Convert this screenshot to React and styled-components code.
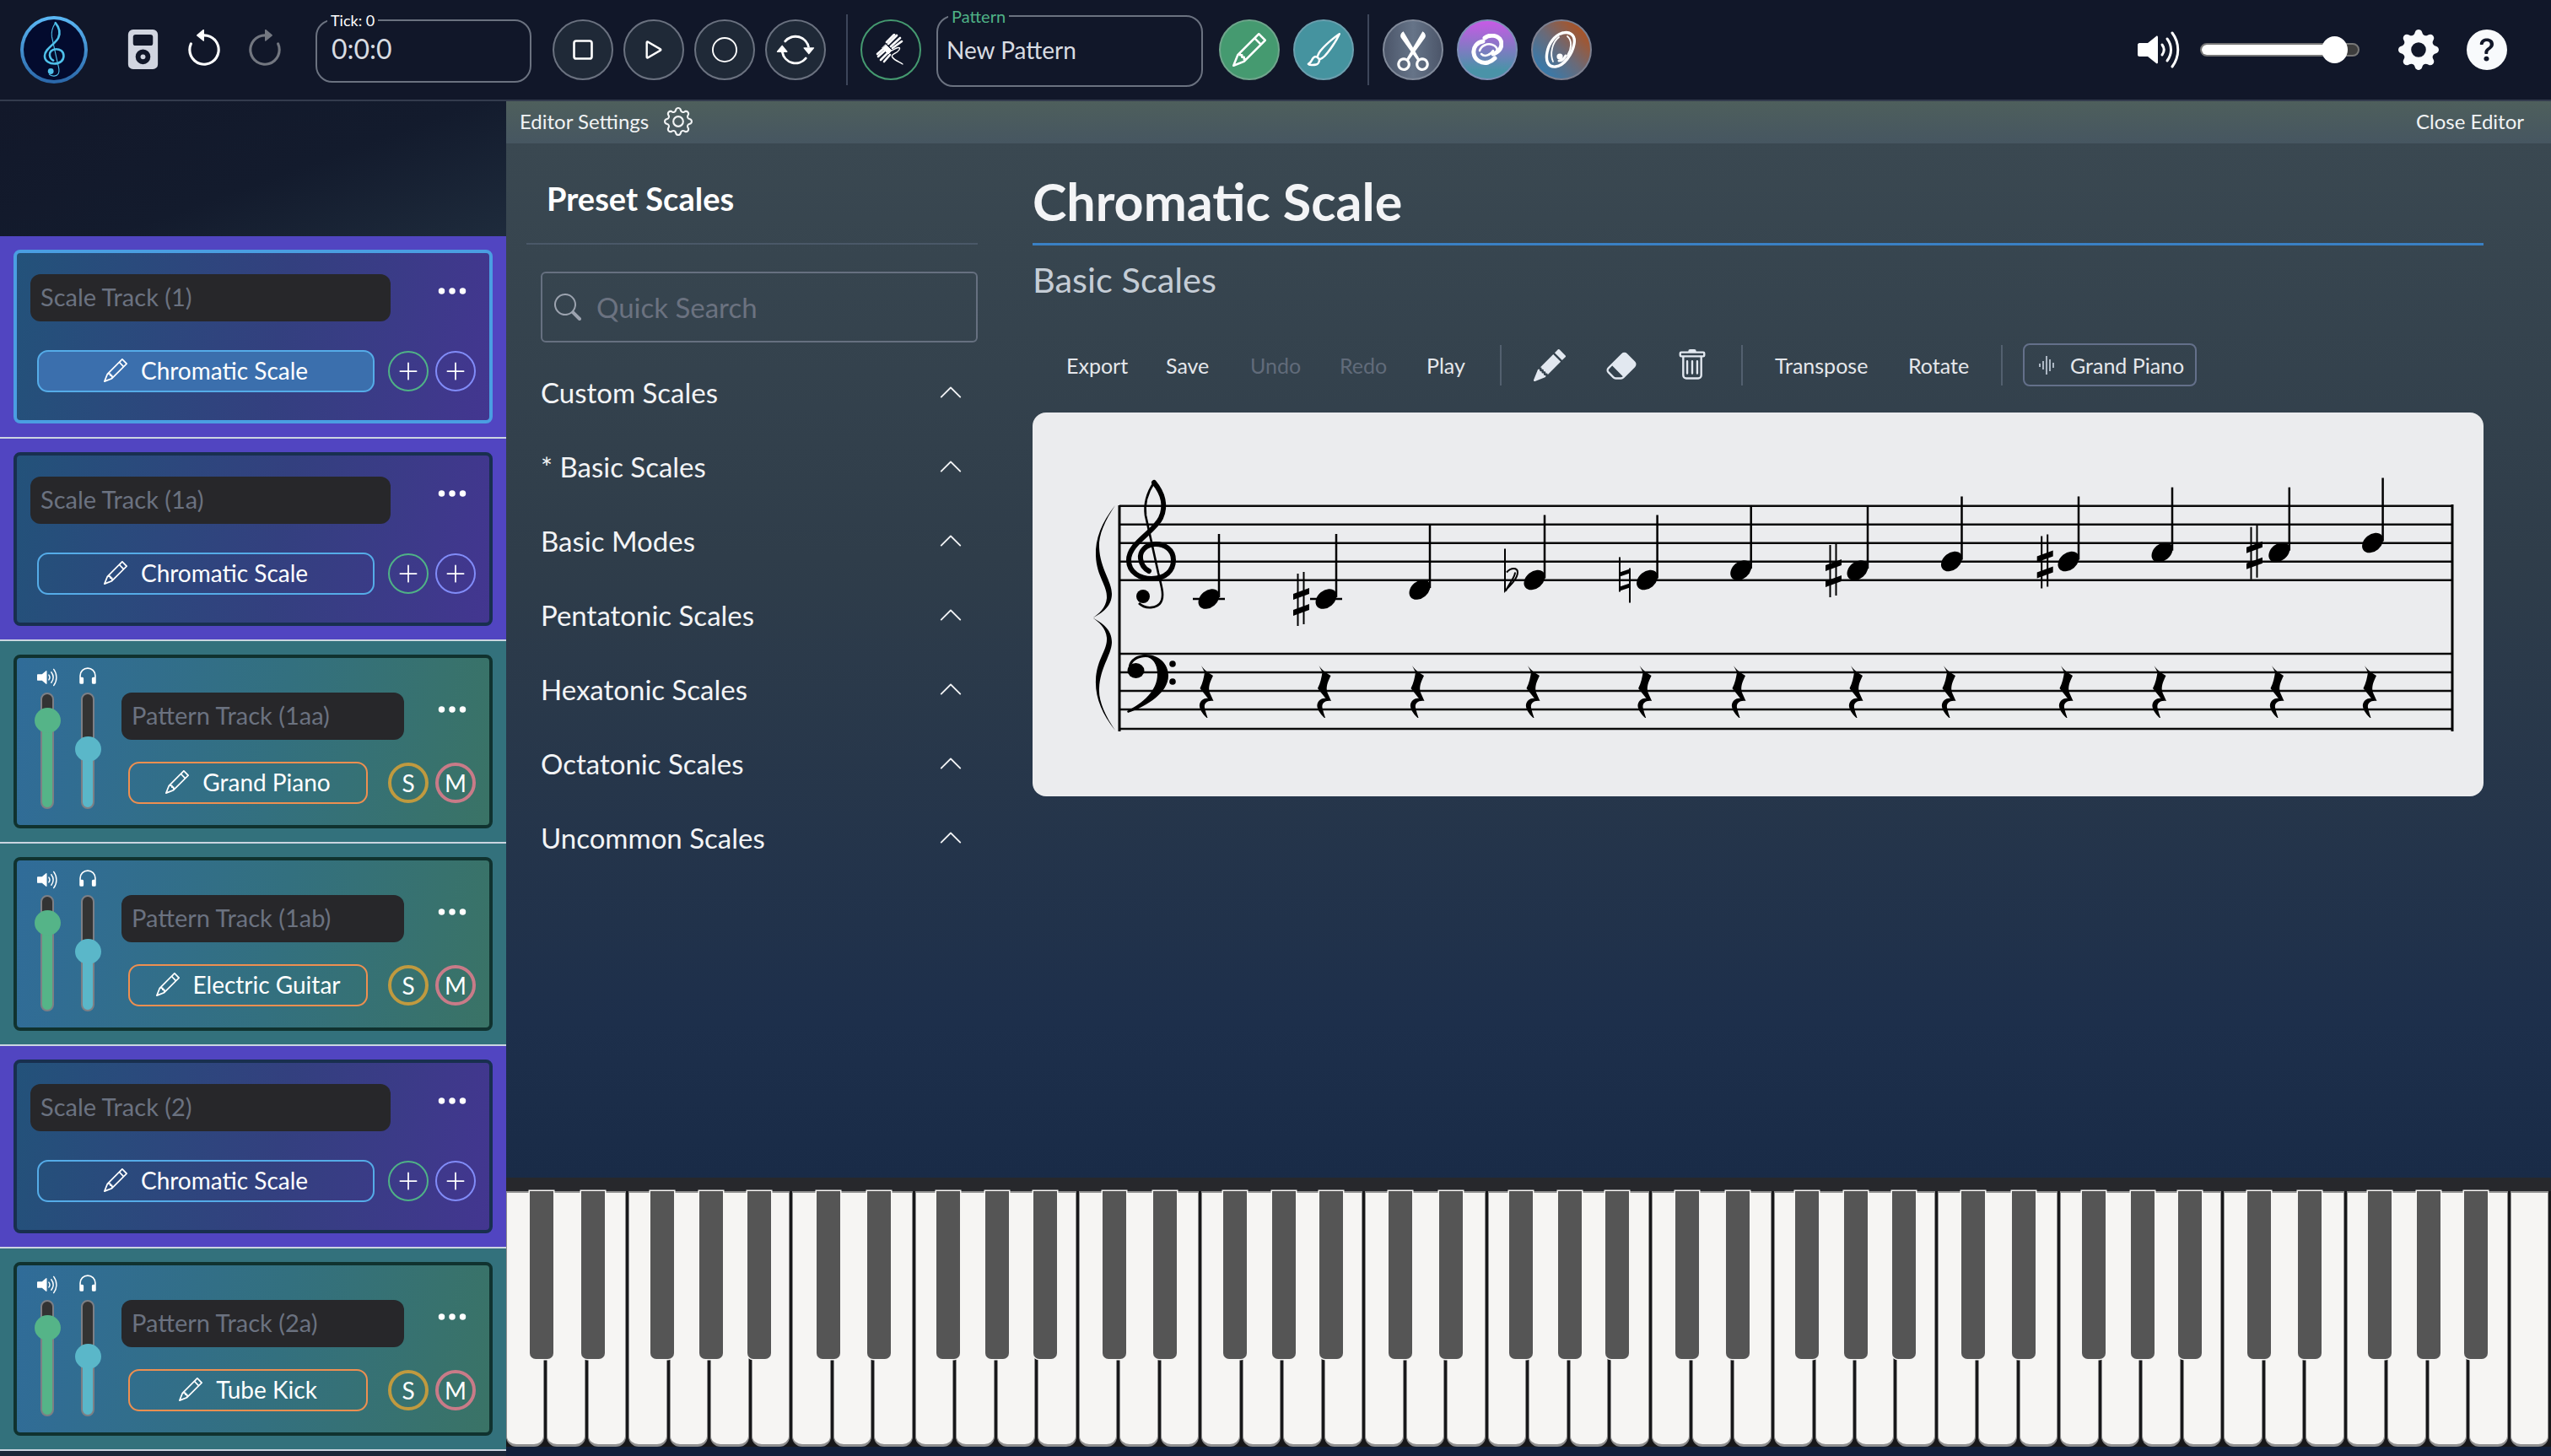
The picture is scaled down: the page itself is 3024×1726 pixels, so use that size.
import styled, { createGlobalStyle } from 'styled-components';
import {
    BsMusicPlayerFill, BsArrowCounterclockwise, BsArrowClockwise, BsStop, BsPlay, BsCircle, BsArrowRepeat,
    BsPencil, BsBrush, BsScissors, BsGearFill, BsQuestionCircleFill, BsGear, BsSearch, BsChevronUp,
    BsPencilFill, BsEraserFill, BsTrash, BsThreeDots, BsHeadphones, BsPlusLg,
} from 'react-icons/bs';

const FONT = '"Lato", "Noto Sans", sans-serif';

const GlobalStyle = createGlobalStyle`
    html, body { margin: 0; padding: 0; background: #111729; overflow: hidden; }
    * { box-sizing: border-box; }
    body { font-family: ${FONT}; color: #fff; }
`;

const Page = styled.div`
    width: 3024px;
    height: 1726px;
    display: flex;
    flex-direction: column;
    overflow: hidden;
`;

/* ---------- top bar ---------- */

const TopBar = styled.header`
    height: 120px;
    flex: none;
    display: flex;
    align-items: center;
    padding: 0 51px 1px 24px;
    background: #111729;
    border-bottom: 2px solid #333b4d;
`;

const Logo = styled.div`
    width: 80px;
    height: 80px;
    border-radius: 50%;
    border: 4px solid transparent;
    background: linear-gradient(#030b2e, #030b2e) padding-box, linear-gradient(#5bb8f5, #2a66a8) border-box;
    display: flex;
    align-items: center;
    justify-content: center;
    svg { width: 30px; height: 68px; }
`;

const PlainIcon = styled.div`
    width: 50px;
    height: 50px;
    margin-left: ${(p) => p.$ml || 0}px;
    color: ${(p) => p.$color || '#fff'};
    display: flex;
    align-items: center;
    justify-content: center;
    font-size: ${(p) => p.$size || 50}px;
`;

const Field = styled.fieldset`
    margin: 0 0 ${(p) => p.$lift}px ${(p) => p.$ml}px;
    width: ${(p) => p.$width}px;
    height: ${(p) => p.$height}px;
    padding: 0 12px;
    border: 2px solid #6b7280;
    border-radius: 20px;
    min-width: 0;
`;

const FieldLegend = styled.legend`
    padding: 0 4px;
    font-size: ${(p) => p.$size}px;
    line-height: ${(p) => p.$size}px;
    color: ${(p) => p.$color};
`;

const FieldValue = styled.div`
    margin: ${(p) => p.$mt}px 0 0 ${(p) => p.$ml}px;
    font-size: ${(p) => p.$size}px;
    line-height: 36px;
    color: #d8dce2;
`;

const Transport = styled.div`
    display: flex;
    gap: 12px;
    margin-left: ${(p) => p.$ml || 0}px;
`;

const RoundButton = styled.div`
    width: 72px;
    height: 72px;
    border-radius: 50%;
    background: ${(p) => p.$bg || '#1f2937'};
    border: 2px solid ${(p) => p.$border || '#6b7280'};
    color: #fff;
    display: flex;
    align-items: center;
    justify-content: center;
    font-size: ${(p) => p.$size || 42}px;
    margin-left: ${(p) => p.$ml || 0}px;
    flex: none;
`;

const VDivider = styled.div`
    width: 2px;
    height: 84px;
    background: #3d465a;
    margin-left: ${(p) => p.$ml}px;
    flex: none;
`;

const RightGroup = styled.div`
    margin-left: auto;
    display: flex;
    align-items: center;
`;

const VolumeTrack = styled.div`
    position: relative;
    width: 189px;
    height: 16px;
    margin-left: 24px;
    border-radius: 8px;
    background: #3d3d3d;
    border: 2px solid #777;
    overflow: visible;
`;

const VolumeFill = styled.div`
    width: 150px;
    height: 100%;
    background: #fff;
    border-radius: 6px 0 0 6px;
`;

const VolumeThumb = styled.div`
    position: absolute;
    left: 142px;
    top: -10px;
    width: 31px;
    height: 32px;
    border-radius: 50%;
    background: #fff;
`;

/* ---------- sidebar ---------- */

const Main = styled.div`
    flex: 1;
    display: flex;
    min-height: 0;
`;

const Sidebar = styled.aside`
    width: 600px;
    flex: none;
    display: flex;
    flex-direction: column;
    background: #1b2738;
`;

const SidebarHead = styled.div`
    height: 160px;
    flex: none;
    background: linear-gradient(160deg, #12182a 0%, #131b2d 55%, #1e2b3c 100%);
`;

const TrackRow = styled.div`
    height: 240px;
    flex: none;
    padding: 16px 16px 0;
    background: ${(p) => (p.$kind === 'scale' ? '#5145c1' : '#33717c')};
    border-bottom: 2px solid #cbd5e1;
`;

const TrackCard = styled.div`
    width: 568px;
    height: 206px;
    border-radius: 8px;
    border: 4px solid ${(p) => (p.$selected ? '#4a9ee2' : p.$kind === 'scale' ? '#182f4f' : '#10322f')};
    background: ${(p) =>
        p.$kind === 'scale'
            ? 'linear-gradient(100deg, #23527a 0%, #33407f 55%, #433690 100%)'
            : 'linear-gradient(100deg, #306c99 0%, #33707f 55%, #3a7366 100%)'};
    display: flex;
`;

const Faders = styled.div`
    width: 108px;
    flex: none;
    padding: 12px 0 0 12px;
    display: grid;
    grid-template-columns: 48px 48px;
    justify-items: center;
`;

const FaderColumn = styled.div`
    display: flex;
    flex-direction: column;
    align-items: center;
    gap: 7px;
    svg { width: 24px; height: 22px; display: block; color: #fff; }
    svg.headphones { width: 26px; height: 26px; margin: -4px 0 0; }
`;

const FaderTrack = styled.div`
    position: relative;
    width: 16px;
    height: 138px;
    border-radius: 8px;
    background: linear-gradient(#333 ${(p) => p.$top}px, ${(p) => p.$color} ${(p) => p.$top}px);
    border: 2px solid #7d7f85;
`;

const FaderThumb = styled.div`
    position: absolute;
    left: -9.5px;
    top: ${(p) => p.$top - 17}px;
    width: 31px;
    height: 30px;
    border-radius: 50%;
    background: ${(p) => p.$color};
`;

const TrackBody = styled.div`
    flex: 1;
    min-width: 0;
    padding: ${(p) => (p.$kind === 'scale' ? '25px 0 0 16px' : '41px 0 0 16px')};
    display: flex;
    flex-direction: column;
    gap: ${(p) => (p.$kind === 'scale' ? 34 : 26)}px;
`;

const TrackTop = styled.div`
    display: flex;
`;

const TrackName = styled.div`
    width: ${(p) => (p.$kind === 'scale' ? 427 : 335)}px;
    height: 56px;
    flex: none;
    border-radius: 12px;
    background: #27272a;
    color: #6b7280;
    font-size: 29px;
    line-height: 54px;
    padding-left: 12px;
`;

const Dots = styled.div`
    margin-left: auto;
    width: 88px;
    height: 40px;
    flex: none;
    display: flex;
    align-items: center;
    justify-content: center;
    font-size: 40px;
    color: #fff;
`;

const TrackBottom = styled.div`
    display: flex;
    align-items: center;
    padding-left: 8px;
    gap: 8px;
`;

const InstrumentButton = styled.div`
    width: ${(p) => (p.$kind === 'scale' ? 400 : 284)}px;
    height: 50px;
    margin-right: ${(p) => (p.$kind === 'scale' ? 8 : 16)}px;
    border-radius: 13px;
    border: 2px solid ${(p) => (p.$kind === 'scale' ? '#55ace8' : '#ee8f50')};
    background: ${(p) => (p.$active ? '#3b6fad' : 'transparent')};
    display: flex;
    align-items: center;
    justify-content: center;
    gap: 16px;
    font-size: 28px;
    padding-bottom: 2px;
    color: #fff;
    svg { font-size: 28px; }
`;

const CircleToggle = styled.div`
    width: 48px;
    height: 48px;
    border-radius: 50%;
    border: ${(p) => p.$weight}px solid ${(p) => p.$color};
    display: flex;
    align-items: center;
    justify-content: center;
    font-size: 28px;
    color: #fff;
`;

/* ---------- editor ---------- */

const Editor = styled.section`
    flex: 1;
    min-width: 0;
    display: flex;
    flex-direction: column;
    background: #1a2c48;
`;

const EditorBar = styled.div`
    height: 50px;
    flex: none;
    display: flex;
    align-items: center;
    padding: 0 32px 3px 16px;
    background: linear-gradient(#4e5f5c, #465661);
    font-size: 24px;
    color: #f1f3f4;
    svg { font-size: 34px; margin-left: 18px; }
`;

const CloseEditor = styled.div`
    margin-left: auto;
`;

const EditorBody = styled.div`
    flex: 1;
    min-height: 0;
    display: flex;
    background: linear-gradient(#3a4851 0%, #2f3d4a 40%, #1d2f4b 85%, #192b47 100%);
`;

const PresetPanel = styled.div`
    width: 624px;
    flex: none;
    padding: 42px 65px 0 24px;
`;

const PresetTitle = styled.div`
    margin-left: 24px;
    font-size: 38px;
    line-height: 46px;
    font-weight: 700;
    padding-bottom: 30px;
`;

const PresetRule = styled.div`
    height: 2px;
    background: #4a5868;
`;

const SearchBox = styled.div`
    margin: 32px 0 15px 17px;
    height: 84px;
    border: 2px solid #667080;
    border-radius: 6px;
    display: flex;
    align-items: center;
    padding-left: 14px;
    font-size: 33px;
    color: #6b7280;
    gap: 18px;
    svg { font-size: 32px; color: #9ca3af; }
`;

const PresetRow = styled.div`
    margin-left: 17px;
    height: 88px;
    display: flex;
    align-items: center;
    justify-content: space-between;
    padding-right: 17px;
    font-size: 33px;
    color: #f3f4f6;
    svg { font-size: 30px; }
`;

const ScorePanel = styled.div`
    width: 1720px;
    flex: none;
    padding-top: 34px;
`;

const ScoreTitle = styled.div`
    font-size: 61px;
    line-height: 70px;
    padding-bottom: 14px;
    font-weight: 700;
    border-bottom: 3px solid #3a80c4;
    color: #f3f4f6;
`;

const ScoreSub = styled.div`
    margin-top: 15px;
    font-size: 41.5px;
    line-height: 50px;
    color: #c5cdd6;
`;

const ScoreToolbar = styled.div`
    margin-top: 51px;
    height: 51px;
    display: flex;
    align-items: center;
    padding-left: 40px;
    font-size: 25px;
`;

const ToolText = styled.div`
    width: ${(p) => p.$width}px;
    flex: none;
    color: ${(p) => (p.$off ? '#616b7a' : '#e5e7eb')};
`;

const ToolIcon = styled.div`
    width: ${(p) => p.$width}px;
    flex: none;
    font-size: 38px;
    color: #e2e8f0;
    display: flex;
    svg { display: block; }
`;

const ToolDivider = styled.div`
    width: 2px;
    height: 48px;
    background: #53606f;
    flex: none;
    margin-right: ${(p) => p.$mr}px;
`;

const InstrumentChip = styled.div`
    width: 206px;
    height: 51px;
    flex: none;
    border: 2px solid #64708a;
    border-radius: 8px;
    display: flex;
    align-items: center;
    padding-left: 16px;
    gap: 16px;
    color: #e5e7eb;
    svg { width: 22px; height: 24px; flex: none; }
`;

const ScoreCard = styled.div`
    margin-top: 31px;
    height: 455px;
    border-radius: 16px;
    background: #ebecee;
    svg { display: block; width: 100%; height: 100%; }
`;

/* ---------- keyboard ---------- */

const Keyboard = styled.div`
    flex: none;
    background: #111f3a;
    padding-bottom: 11px;
`;

const KeyStrip = styled.div`
    height: 16px;
    background: #27282c;
`;

const Keys = styled.div`
    position: relative;
    height: 303px;
    display: flex;
    background: #18181a;
`;

const WhiteKey = styled.div`
    flex: 1;
    margin-right: 3px;
    background: #f6f5f3;
    border: 1px solid #8f8f8f;
    border-width: 2px 1px 3px;
    border-radius: 0 0 12px 12px;
`;

const BlackKey = styled.div.attrs((p) => ({ style: { left: p.$left } }))`
    position: absolute;
    top: 0;
    width: 28px;
    height: 199px;
    background: #555;
    border-radius: 0 0 7px 7px;
    box-shadow: 0 0 0 1.5px #f6f5f3;
`;

/* ---------- drawings ---------- */

const CLEF_STROKE_THIN = 'M1368 573C1360 585 1356 598 1358 612L1373 680C1378 700 1380 708 1376 715C1372 722 1358 724 1350 716';
const CLEF_STROKE_THICK = 'M1368 573C1378 585 1383 600 1376 615C1368 632 1338 645 1338 665C1338 680 1352 687 1365 687C1382 687 1391 677 1391 665C1391 652 1380 646 1370 646C1358 646 1351 655 1352 663C1353 671 1358 676 1362 678';
const BRACE_HALF = 'M1322 600C1306 620 1298 640 1299 660C1300 685 1313 695 1312 710C1311 722 1302 729 1295.5 733.5C1306 728 1318 720 1318 705C1318 690 1304 675 1303 650C1302 635 1310 618 1322 600Z';

const TrebleClefShape = () => (
    <>
        <path d={CLEF_STROKE_THIN} fill="none" stroke="currentColor" strokeWidth="2.6" />
        <path d={CLEF_STROKE_THICK} fill="none" stroke="currentColor" strokeWidth="6" strokeLinecap="round" />
        <circle cx="1355" cy="708" r="8" fill="currentColor" />
    </>
);

const LogoClef = () => (
    <svg viewBox="1332 568 64 160" style={{ color: '#4fc0ea' }}>
        <TrebleClefShape />
    </svg>
);

const SpeakerIcon = ({ width = 50, height = 44 }) => (
    <svg width={width} height={height} viewBox="0 0 50 44" fill="none">
        <path d="M2 14H12L22 6C23 5 24 6 24 7V37C24 38 23 39 22 38L12 30H2C1 30 0 29 0 28V16C0 15 1 14 2 14Z" fill="currentColor" />
        <path d="M29 16C32 20 32 24 29 28" stroke="currentColor" strokeWidth="3" strokeLinecap="round" />
        <path d="M35 9C41 17 41 27 35 35" stroke="currentColor" strokeWidth="3" strokeLinecap="round" />
        <path d="M41 2C50 14 50 30 41 42" stroke="currentColor" strokeWidth="3" strokeLinecap="round" />
    </svg>
);

const RopeIcon = () => (
    <svg width="36" height="38" viewBox="0 0 36 38" fill="none" stroke="#fff" strokeLinecap="round">
        <path d="M25 2L15 12M29 5L18 15M31 9L20 17M22 1L13 10" strokeWidth="2.6" />
        <path d="M12 19L3 27M15 22L6 31M17 25L10 33M10 17L2 24" strokeWidth="2.6" />
        <path d="M12 13L19 20L15 24L8 17Z" fill="#fff" strokeWidth="1" />
        <path d="M19 20C26 16 30 15 28 19C25 24 17 24 20 28C22 31 27 33 32 36" strokeWidth="1.4" />
    </svg>
);

const LinkSwirl = () => (
    <svg width="38" height="38" viewBox="0 0 38 38" fill="none" stroke="#fff" strokeLinecap="round">
        <path d="M16 5C22 0 32 2 35 8C38 15 33 22 26 24" strokeWidth="5" />
        <path d="M14 9C7 10 2 16 3 23C4 31 12 36 20 34C23 33 26 31 28 29" strokeWidth="5" />
        <path d="M10 20C12 14 19 11 25 13C29 14 32 18 30 21" strokeWidth="2.5" />
        <path d="M12 24C16 28 23 25 26 20" strokeWidth="2.5" />
    </svg>
);

const NoteSwirl = () => (
    <svg width="42" height="46" viewBox="0 0 42 46" fill="none" stroke="#fff" strokeLinecap="round">
        <path d="M20 4C30 0 38 5 36 16C34 28 24 42 14 43C5 44 2 36 4 26C6 15 13 6 22 3" strokeWidth="3.4" />
        <path d="M18 8C10 14 7 28 11 37M28 7C34 12 33 22 28 30" strokeWidth="1.8" />
        <path d="M26 30C24 34 22 36 18 36" strokeWidth="3" />
        <circle cx="19" cy="31" r="3.6" fill="#fff" stroke="none" />
    </svg>
);

const WaveIcon = () => (
    <svg viewBox="0 0 22 24" fill="none" stroke="#cbd5e1" strokeWidth="1.6">
        <path d="M2 10V14M6 7V17M10 1V23M14 5V19M18 9V15" />
    </svg>
);

const NOTES = [
    { x: 1433, y: 711, ledger: true },
    { x: 1572, y: 711, ledger: true, mark: 'sharp', mx: 1542 },
    { x: 1683, y: 700 },
    { x: 1819, y: 688.5, mark: 'flat', mx: 1784 },
    { x: 1952.6, y: 688.5, mark: 'natural', mx: 1920 },
    { x: 2063.7, y: 677 },
    { x: 2202, y: 677, mark: 'sharp', mx: 2173 },
    { x: 2313.5, y: 666.5 },
    { x: 2452, y: 666.5, mark: 'sharp', mx: 2423.7 },
    { x: 2563, y: 655.7 },
    { x: 2701.8, y: 655.7, mark: 'sharp', mx: 2672 },
    { x: 2812.6, y: 644.5 },
];

const RESTS = [1429, 1568.5, 1679, 1816, 1948.6, 2060, 2199, 2309, 2448, 2558.5, 2698, 2808];
const STAFF = [600.7, 622.7, 644.7, 666.7, 688.7, 776, 798, 820, 842, 865];

const Sharp = ({ x, y }) => (
    <g>
        <path d={`M${x - 3.5} ${y - 30}V${y + 32}M${x + 3.5} ${y - 32}V${y + 30}`} stroke="#000" strokeWidth="2" />
        <path d={`M${x - 9} ${y - 6}L${x + 10} ${y - 13}V${y - 6}L${x - 9} ${y + 1}ZM${x - 9} ${y + 13}L${x + 10} ${y + 6}V${y + 13}L${x - 9} ${y + 20}Z`} fill="#000" />
    </g>
);

const Flat = ({ x, y }) => (
    <path
        d={`M${x} ${y - 37}V${y + 13}C${x + 7} ${y + 6} ${x + 15} ${y - 2} ${x + 15} ${y - 9}C${x + 15} ${y - 15} ${x + 7} ${y - 15} ${x + 2} ${y - 9}M${x + 1} ${y + 13}C${x + 5} ${y + 4} ${x + 12} ${y - 3} ${x + 12} ${y - 9}`}
        fill="none"
        stroke="#000"
        strokeWidth="2"
    />
);

const Natural = ({ x, y }) => (
    <g>
        <path d={`M${x} ${y - 27}V${y + 14}M${x + 12} ${y - 14}V${y + 27}`} stroke="#000" strokeWidth="2" />
        <path d={`M${x} ${y - 9}L${x + 12} ${y - 13}V${y - 8}L${x} ${y - 4}ZM${x} ${y + 8}L${x + 12} ${y + 4}V${y + 9}L${x} ${y + 13}Z`} fill="#000" />
    </g>
);

const MARKS = { sharp: Sharp, flat: Flat, natural: Natural };

const Score = () => (
    <svg viewBox="1224 490 1720 455" style={{ color: '#000' }}>
        {STAFF.map((y) => (
            <line key={y} x1="1327" x2="2907" y1={y} y2={y} stroke="#0a0a0a" strokeWidth="2.4" />
        ))}
        <line x1="1327" x2="1327" y1="600" y2="868" stroke="#000" strokeWidth="3" />
        <line x1="2907" x2="2907" y1="599" y2="868" stroke="#000" strokeWidth="3" />
        <path d={BRACE_HALF} fill="#000" />
        <path d={BRACE_HALF} transform="translate(0 1467) scale(1 -1)" fill="#000" />
        <TrebleClefShape />
        <ellipse cx="1346.5" cy="796" rx="10" ry="9" fill="#000" />
        <path
            d="M1338 796C1336 783 1348 777 1358 777C1374 777 1385 788 1385 802C1385 822 1360 838 1337 846L1336 844C1355 834 1372 820 1372 800C1372 788 1366 780 1358 780C1350 780 1344 784 1342 788Z"
            fill="#000"
        />
        <circle cx="1390" cy="788" r="3.8" fill="#000" />
        <circle cx="1390" cy="809" r="3.8" fill="#000" />
        {NOTES.map((n) => {
            const Mark = n.mark && MARKS[n.mark];
            return (
                <g key={n.x}>
                    {n.ledger && <line x1={n.x - 19} x2={n.x + 19} y1={n.y} y2={n.y} stroke="#000" strokeWidth="2.4" />}
                    <ellipse cx={n.x} cy={n.y} rx="14" ry="10" transform={`rotate(-40 ${n.x} ${n.y})`} fill="#000" />
                    <line x1={n.x + 12} x2={n.x + 12} y1={n.y - 2} y2={n.y - 77} stroke="#000" strokeWidth="2.5" />
                    {Mark && <Mark x={n.mx} y={n.y} />}
                </g>
            );
        })}
        {RESTS.map((x) => (
            <path
                key={x}
                transform={`translate(${x} 790)`}
                d="M-5 0C-2 5 4 9 9 12C5 20 3 26 5 32L9.5 42C3 41 -2 44 -1 50C0 54 1 58 2.5 62L1.5 62C-4 57 -8 50 -7 46C-6 41 -1 38 3 39L-6.5 27C-3 20 -2 14 -1 8Z"
                fill="#000"
            />
        ))}
    </svg>
);

/* ---------- data ---------- */

const TRACKS = [
    { kind: 'scale', name: 'Scale Track (1)', inst: 'Chromatic Scale', selected: true },
    { kind: 'scale', name: 'Scale Track (1a)', inst: 'Chromatic Scale' },
    { kind: 'pattern', name: 'Pattern Track (1aa)', inst: 'Grand Piano' },
    { kind: 'pattern', name: 'Pattern Track (1ab)', inst: 'Electric Guitar' },
    { kind: 'scale', name: 'Scale Track (2)', inst: 'Chromatic Scale' },
    { kind: 'pattern', name: 'Pattern Track (2a)', inst: 'Tube Kick' },
];

const PRESETS = ['Custom Scales', '* Basic Scales', 'Basic Modes', 'Pentatonic Scales', 'Hexatonic Scales', 'Octatonic Scales', 'Uncommon Scales'];

const WHITE_COUNT = 50;
const OCTAVE = 339.3;
const BLACK_OFFSETS = [28.3, 88.5, 171, 229, 285.5];
const blackKeys = [];
for (let o = 0; o < 8; o++) {
    BLACK_OFFSETS.forEach((off) => {
        const left = off + o * OCTAVE;
        if (left < 2400) blackKeys.push(left);
    });
}

const Fader = ({ icon, top, color }) => (
    <FaderColumn>
        {icon}
        <FaderTrack $top={top} $color={color}>
            <FaderThumb $top={top} $color={color} />
        </FaderTrack>
    </FaderColumn>
);

const Track = ({ kind, name, inst, selected }) => (
    <TrackRow $kind={kind}>
        <TrackCard $kind={kind} $selected={selected}>
            {kind === 'pattern' && (
                <Faders>
                    <Fader icon={<SpeakerIcon width={24} height={22} />} top={33} color="#55b488" />
                    <Fader icon={<BsHeadphones className="headphones" />} top={67} color="#5ab7c9" />
                </Faders>
            )}
            <TrackBody $kind={kind}>
                <TrackTop>
                    <TrackName $kind={kind}>{name}</TrackName>
                    <Dots>
                        <BsThreeDots />
                    </Dots>
                </TrackTop>
                <TrackBottom>
                    <InstrumentButton $kind={kind} $active={selected}>
                        <BsPencil />
                        {inst}
                    </InstrumentButton>
                    {kind === 'scale' ? (
                        <>
                            <CircleToggle $weight={2} $color="#4fb286"><BsPlusLg /></CircleToggle>
                            <CircleToggle $weight={2} $color="#818cf8"><BsPlusLg /></CircleToggle>
                        </>
                    ) : (
                        <>
                            <CircleToggle $weight={4} $color="#c09a3f">S</CircleToggle>
                            <CircleToggle $weight={4} $color="#c97b88">M</CircleToggle>
                        </>
                    )}
                </TrackBottom>
            </TrackBody>
        </TrackCard>
    </TrackRow>
);

const App = () => (
    <Page>
        <GlobalStyle />
        <TopBar>
            <Logo><LogoClef /></Logo>
            <PlainIcon $ml={40} $color="#d1d5e0" $size={47}><BsMusicPlayerFill /></PlainIcon>
            <PlainIcon $ml={23} $size={50}><BsArrowCounterclockwise /></PlainIcon>
            <PlainIcon $ml={22} $color="#737780" $size={50}><BsArrowClockwise /></PlainIcon>
            <Field $ml={35} $width={256} $height={83} $lift={4}>
                <FieldLegend $size={18} $color="#fff">Tick: 0</FieldLegend>
                <FieldValue $ml={5} $mt={7} $size={32}>0:0:0</FieldValue>
            </Field>
            <Transport $ml={25}>
                <RoundButton><BsStop /></RoundButton>
                <RoundButton $size={38}><BsPlay /></RoundButton>
                <RoundButton $size={30}><BsCircle /></RoundButton>
                <RoundButton $size={46}><BsArrowRepeat /></RoundButton>
            </Transport>
            <VDivider $ml={24} />
            <RoundButton $ml={15} $bg="transparent" $border="#459a70"><RopeIcon /></RoundButton>
            <Field $ml={18} $width={316} $height={94} $lift={5}>
                <FieldLegend $size={20} $color="#4fb286">Pattern</FieldLegend>
                <FieldValue $ml={-2} $mt={12} $size={28}>New Pattern</FieldValue>
            </Field>
            <RoundButton $ml={19} $bg="#459a70" $border="#6fa68c" $size={40}><BsPencil /></RoundButton>
            <RoundButton $ml={16} $bg="#45939f" $border="#6b9fae" $size={40}><BsBrush /></RoundButton>
            <VDivider $ml={16} />
            <RoundButton $ml={16} $bg="linear-gradient(90deg, #4c566a, #667488 50%, #4c566a)" $border="#818a9a" $size={50}><BsScissors /></RoundButton>
            <RoundButton $ml={16} $bg="linear-gradient(#c85ae6, #4a93a8 85%)" $border="#7d8fb5"><LinkSwirl /></RoundButton>
            <RoundButton $ml={16} $bg="linear-gradient(45deg, #387aab 15%, #6a6a78 50%, #a85428 85%)" $border="#7d8090"><NoteSwirl /></RoundButton>
            <RightGroup>
                <SpeakerIcon />
                <VolumeTrack>
                    <VolumeFill />
                    <VolumeThumb />
                </VolumeTrack>
                <PlainIcon $ml={45} $color="#f8fafc" $size={48}><BsGearFill /></PlainIcon>
                <PlainIcon $ml={31} $color="#f8fafc" $size={48}><BsQuestionCircleFill /></PlainIcon>
            </RightGroup>
        </TopBar>
        <Main>
            <Sidebar>
                <SidebarHead />
                {TRACKS.map((t) => (
                    <Track key={t.name} {...t} />
                ))}
            </Sidebar>
            <Editor>
                <EditorBar>
                    Editor Settings
                    <BsGear />
                    <CloseEditor>Close Editor</CloseEditor>
                </EditorBar>
                <EditorBody>
                    <PresetPanel>
                        <PresetTitle>Preset Scales</PresetTitle>
                        <PresetRule />
                        <SearchBox>
                            <BsSearch />
                            Quick Search
                        </SearchBox>
                        {PRESETS.map((p) => (
                            <PresetRow key={p}>
                                {p}
                                <BsChevronUp />
                            </PresetRow>
                        ))}
                    </PresetPanel>
                    <ScorePanel>
                        <ScoreTitle>Chromatic Scale</ScoreTitle>
                        <ScoreSub>Basic Scales</ScoreSub>
                        <ScoreToolbar>
                            <ToolText $width={118}>Export</ToolText>
                            <ToolText $width={100}>Save</ToolText>
                            <ToolText $off $width={106}>Undo</ToolText>
                            <ToolText $off $width={103}>Redo</ToolText>
                            <ToolText $width={87}>Play</ToolText>
                            <ToolDivider $mr={38} />
                            <ToolIcon $width={85}><BsPencilFill /></ToolIcon>
                            <ToolIcon $width={84}><BsEraserFill /></ToolIcon>
                            <ToolIcon $width={77}><BsTrash /></ToolIcon>
                            <ToolDivider $mr={38} />
                            <ToolText $width={158}>Transpose</ToolText>
                            <ToolText $width={110}>Rotate</ToolText>
                            <ToolDivider $mr={24} />
                            <InstrumentChip>
                                <WaveIcon />
                                Grand Piano
                            </InstrumentChip>
                        </ScoreToolbar>
                        <ScoreCard><Score /></ScoreCard>
                    </ScorePanel>
                </EditorBody>
                <Keyboard>
                    <KeyStrip />
                    <Keys>
                        {Array.from({ length: WHITE_COUNT }, (_, i) => (
                            <WhiteKey key={i} />
                        ))}
                        {blackKeys.map((left) => (
                            <BlackKey key={left} $left={left} />
                        ))}
                    </Keys>
                </Keyboard>
            </Editor>
        </Main>
    </Page>
);

export default App;
